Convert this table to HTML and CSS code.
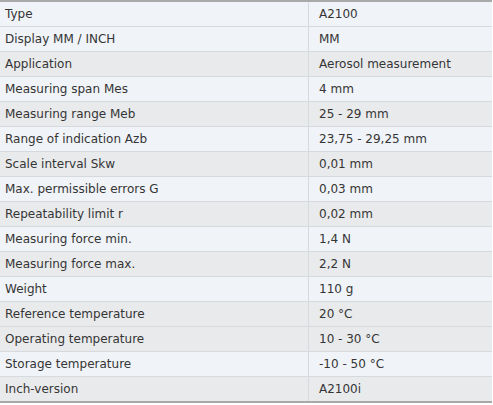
FILE: index.html
```html
<!DOCTYPE html>
<html>
<head>
<meta charset="utf-8">
<link rel="stylesheet" href="styles.css">
</head>
<body>
<table class="specs">
<tbody>
<tr class="light"><td class="k">Type</td><td class="v">A2100</td></tr>
<tr class="light"><td class="k">Display MM / INCH</td><td class="v">MM</td></tr>
<tr class="gray"><td class="k">Application</td><td class="v">Aerosol measurement</td></tr>
<tr class="light"><td class="k">Measuring span Mes</td><td class="v">4 mm</td></tr>
<tr class="gray"><td class="k">Measuring range Meb</td><td class="v">25 - 29 mm</td></tr>
<tr class="light"><td class="k">Range of indication Azb</td><td class="v">23,75 - 29,25 mm</td></tr>
<tr class="gray"><td class="k">Scale interval Skw</td><td class="v">0,01 mm</td></tr>
<tr class="light"><td class="k">Max. permissible errors G</td><td class="v">0,03 mm</td></tr>
<tr class="gray"><td class="k">Repeatability limit r</td><td class="v">0,02 mm</td></tr>
<tr class="light"><td class="k">Measuring force min.</td><td class="v">1,4 N</td></tr>
<tr class="gray"><td class="k">Measuring force max.</td><td class="v">2,2 N</td></tr>
<tr class="light"><td class="k">Weight</td><td class="v">110 g</td></tr>
<tr class="gray"><td class="k">Reference temperature</td><td class="v">20 °C</td></tr>
<tr class="gray"><td class="k">Operating temperature</td><td class="v">10 - 30 °C</td></tr>
<tr class="light"><td class="k">Storage temperature</td><td class="v">-10 - 50 °C</td></tr>
<tr class="gray last"><td class="k">Inch-version</td><td class="v">A2100i</td></tr>
</tbody>
</table>
</body>
</html>
```
FILE: styles.css
```css
html, body {
  margin: 0;
  padding: 0;
  background: #ffffff;
}
.specs {
  border-collapse: collapse;
  width: 492px;
  table-layout: fixed;
  border-top: 2px solid #a9a9a9;
  border-bottom: 2px solid #a9a9a9;
  font-family: "DejaVu Sans", Verdana, sans-serif;
  font-size: 12px;
  color: #353535;
}
.specs td {
  height: 24px;
  padding: 0;
  border-bottom: 1px solid #d6dadf;
  vertical-align: middle;
  white-space: nowrap;
}
.specs tr.last td {
  border-bottom: none;
}
.specs td.k {
  width: 303px;
  padding-left: 5px;
  border-right: 1px solid #d6dadf;
}
.specs td.v {
  padding-left: 10px;
}
.light td {
  background: #f0f3f8;
}
.gray td {
  background: #e9eaec;
}
```
